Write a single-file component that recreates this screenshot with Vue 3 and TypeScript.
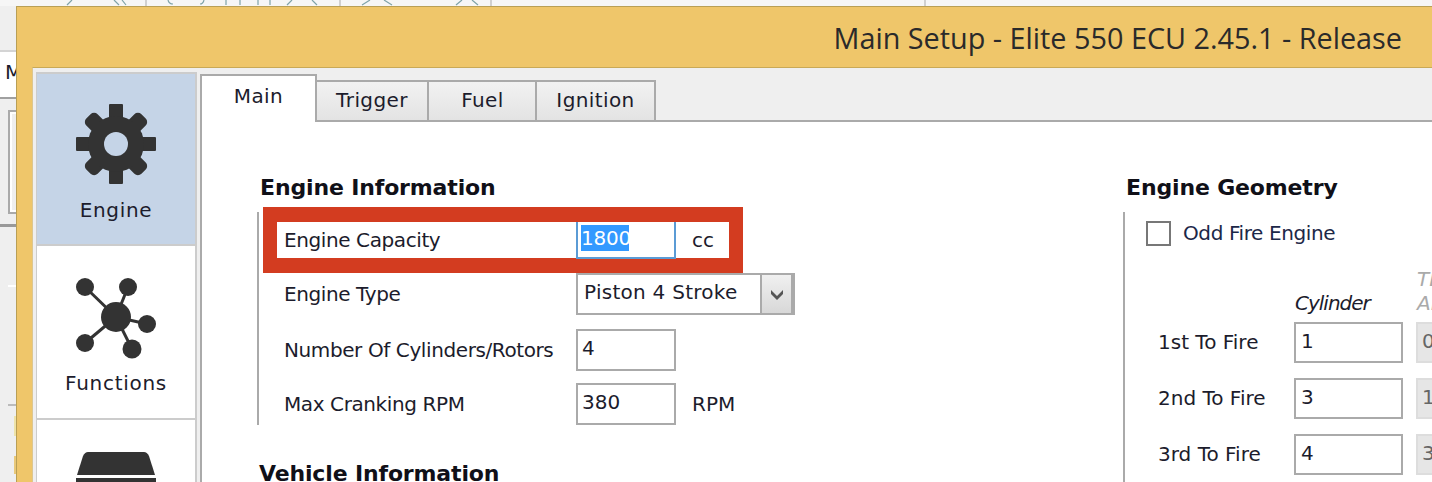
<script setup lang="ts">
const tabs = ['Main', 'Trigger', 'Fuel', 'Ignition']
const cardinalTeeth = [0, 90, 180, 270]
const diagonalTeeth = [45, 135, 225, 315]
const satellites = [
  { x: 9, y: 10, r: 9 },
  { x: 52, y: 10, r: 9 },
  { x: 71, y: 47, r: 9 },
  { x: 56, y: 72, r: 9.5 },
  { x: 9, y: 66, r: 9 },
]
const engineRows = [
  { label: 'Engine Type', value: 'Piston 4 Stroke', kind: 'select', unit: '' },
  { label: 'Number Of Cylinders/Rotors', value: '4', kind: 'input', unit: '' },
  { label: 'Max Cranking RPM', value: '380', kind: 'input', unit: 'RPM' },
]
const firing = [
  { label: '1st To Fire', cyl: '1', angle: '0' },
  { label: '2nd To Fire', cyl: '3', angle: '1' },
  { label: '3rd To Fire', cyl: '4', angle: '3' },
]
</script>

<template>
  <div class="scene">
    <div class="backdrop">
      <svg class="toolbar-strip" viewBox="0 0 1432 6" width="1432" height="6">
        <g fill="none" stroke="#7fa3a8" stroke-width="1.2">
          <path d="M72 0L67 5M114 0L119 5M122 0L126 5" />
          <path d="M168 0Q169 4 173 4M200 4Q203 4 204 0" />
          <path d="M226 0V5M240 0V5M258 0V5M270 0V5M292 0L287 5M312 0L317 5" />
          <path d="M370 0L362 5M384 0L392 5M462 0L456 5M472 0L478 5" />
        </g>
        <path d="M146 0V6M340 0V6M491 0V6M925 0V6" stroke="#c4c4c4" stroke-width="1.5" />
      </svg>
      <div class="menu-band"><span class="menu-letter">M</span></div>
      <div class="side-box"></div>
      <div class="back-rule rule-a"></div>
      <div class="back-rule rule-b"></div>
      <div class="back-rule rule-c"></div>
      <div class="back-mark mark-a"></div>
      <div class="back-mark mark-b"></div>
    </div>

    <section class="window">
      <header class="titlebar">Main Setup - Elite 550 ECU 2.45.1 - Release</header>
      <div class="client">
        <nav class="sidebar">
          <div class="nav-item active">
            <svg class="nav-icon" viewBox="0 0 80 80" width="80" height="80">
              <rect v-for="a in cardinalTeeth" :key="a" x="33" y="0" width="14" height="40" rx="1" fill="#333" :transform="`rotate(${a} 40 40)`" />
              <rect v-for="a in diagonalTeeth" :key="a" x="32" y="1" width="16" height="39" rx="5" fill="#333" :transform="`rotate(${a} 40 40)`" />
              <circle cx="40" cy="40" r="28" fill="#333" />
              <circle cx="40" cy="40" r="12" fill="#c5d4e7" />
            </svg>
            <span>Engine</span>
          </div>
          <div class="nav-item second-item">
            <svg class="nav-icon" viewBox="0 0 80 80" width="80" height="80">
              <line v-for="(s, i) in satellites" :key="'l' + i" x1="40" y1="40" :x2="s.x" :y2="s.y" stroke="#333" stroke-width="3" />
              <circle cx="40" cy="40" r="15" fill="#333" />
              <circle v-for="(s, i) in satellites" :key="'c' + i" :cx="s.x" :cy="s.y" :r="s.r" fill="#333" />
            </svg>
            <span>Functions</span>
          </div>
          <div class="nav-item last">
            <svg class="nav-icon" viewBox="0 0 80 32" width="80" height="32">
              <path d="M12 0H68Q71 0 73 4L79 23H1L7 4Q9 0 12 0Z" fill="#333" />
              <rect x="0" y="26" width="80" height="6" fill="#333" />
            </svg>
          </div>
        </nav>

        <main class="panel">
          <div class="tabstrip">
            <div v-for="(t, i) in tabs" :key="t" class="tab" :class="[i === 0 ? 'tab-on' : '', 'tab-' + t.toLowerCase()]">{{ t }}</div>
          </div>
          <div class="page">
            <div class="col-left">
              <h3 class="group-title">Engine Information</h3>
              <div class="group">
                <div class="row row-first">
                  <label class="row-label">Engine Capacity</label>
                  <div class="field focus"><span class="selected">1800</span></div>
                  <span class="unit">cc</span>
                  <div class="callout"></div>
                </div>
                <div v-for="r in engineRows" :key="r.label" class="row">
                  <label class="row-label">{{ r.label }}</label>
                  <div v-if="r.kind === 'select'" class="select">
                    <span class="select-value">{{ r.value }}</span>
                    <span class="select-btn">
                      <svg viewBox="0 0 14 12" width="14" height="12"><path d="M1 2L7 8L13 2V6L7 12L1 6Z" fill="#555" /></svg>
                    </span>
                  </div>
                  <div v-else class="field">{{ r.value }}</div>
                  <span v-if="r.unit" class="unit">{{ r.unit }}</span>
                </div>
              </div>
              <h3 class="group-title second">Vehicle Information</h3>
            </div>

            <div class="col-right">
              <h3 class="group-title">Engine Geometry</h3>
              <div class="group group-right">
                <div class="check-row"><span class="checkbox"></span><span>Odd Fire Engine</span></div>
                <div class="fire-head">
                  <span class="head-cyl">Cylinder</span>
                  <span class="head-angle">TDC<br />Angle</span>
                </div>
                <div v-for="f in firing" :key="f.label" class="fire-row">
                  <label class="fire-label">{{ f.label }}</label>
                  <div class="field fire-field">{{ f.cyl }}</div>
                  <div class="field field-off">{{ f.angle }}</div>
                </div>
              </div>
            </div>
          </div>
        </main>
      </div>
    </section>
  </div>
</template>

<style>
html, body { margin: 0; background: #efefef; }
</style>

<style scoped>
.scene {
  position: relative;
  width: 1432px;
  height: 482px;
  overflow: hidden;
  background: #efefef;
  font-family: "DejaVu Sans", sans-serif;
  font-size: 20px;
  color: #1c1c2c;
}
.backdrop { position: absolute; inset: 0; }
.toolbar-strip { display: block; background: #f6f6f6; }
.menu-band {
  position: absolute; left: 0; top: 50px; width: 16px; height: 49px;
  background: #fff; border-top: 2px solid #d4d4d4; border-bottom: 2px solid #a0a0a0; box-sizing: border-box;
}
.menu-letter { position: absolute; left: 5px; top: 8px; }
.side-box { position: absolute; left: 8px; top: 110px; width: 12px; height: 104px; border: 2px solid #aaa; box-sizing: border-box; outline: 2px solid #fff; outline-offset: -4px; }
.back-rule { position: absolute; left: 0; width: 16px; background: #999; }
.rule-a { top: 224px; height: 3px; }
.rule-b { top: 404px; left: 8px; width: 8px; height: 2px; background: #bbb; }
.rule-c { top: 285px; left: 8px; width: 8px; height: 2px; background: #fff; }
.back-mark { position: absolute; left: 14px; width: 2px; background: #efe3a8; }
.mark-a { top: 416px; height: 20px; }
.mark-b { top: 456px; height: 18px; background: #e9c97a; }

.window {
  position: absolute; left: 16px; top: 6px; width: 1500px; height: 520px;
  box-sizing: border-box;
  background: #efc66a;
  border: 1px solid #b99f55;
  padding: 0 0 0 15px;
  display: flex; flex-direction: column;
}
.titlebar {
  height: 60px; flex: none; box-sizing: border-box; width: 1370px;
  text-align: right; white-space: nowrap;
  font-family: "Open Sans", sans-serif; font-size: 28.8px; line-height: 62px; color: #2a2a2a;
}
.client {
  flex: 1; display: flex; background: #efefef; border-top: 1px solid #c9a956; border-left: 1px solid #dcc690;
  padding: 4px 0 0 3px; gap: 3px; min-height: 0;
}
.sidebar {
  width: 161px; flex: none; box-sizing: border-box; background: #fff;
  border: 2px solid #ccc; border-width: 2px 2px 0 1px;
  text-align: center;
}
.nav-item { height: 172px; box-sizing: border-box; padding-top: 30px; border-bottom: 2px solid #ccc; display: flex; flex-direction: column; align-items: center; }
.nav-item.active { background: #c5d4e7; }
.nav-item span { line-height: 24px; margin-top: 14px; letter-spacing: .7px; }
.second-item { height: 174px; padding-top: 31px; }
.nav-item.last { border-bottom: 0; padding-top: 32px; }
.nav-icon { flex: none; overflow: visible; }

.panel { flex: 1; min-width: 0; padding-top: 4px; }
.tabstrip { display: flex; align-items: flex-end; height: 46px; box-sizing: border-box; border-bottom: 2px solid #aaa; position: relative; }
.tab {
  box-sizing: border-box; height: 40px; border: 2px solid #aaa; border-left-width: 0; border-bottom: 0;
  background: linear-gradient(#f2f2f2, #e3e3e3); text-align: center; line-height: 36px; letter-spacing: .4px;
}
.tab-on { background: #fff; width: 117px; border-left-width: 2px; line-height: 40px; margin-bottom: -2px; position: relative; z-index: 1; height: 48px; }
.tab-trigger { width: 112px; }
.tab-fuel { width: 108px; padding-left: 1px; }
.tab-ignition { width: 119px; }

.page {
  background: #fff; border-left: 2px solid #aaa; height: 400px;
  display: flex; padding: 53px 0 0 58px; box-sizing: border-box;
}
.col-left { width: 866px; flex: none; }
.group-title { margin: 0; font-size: 22px; font-weight: 700; line-height: 26px; color: #101018; font-family: "DejaVu Sans", sans-serif; letter-spacing: -.15px; }
.group-title.second { margin-top: 36px; margin-left: -1px; }
.group { border-left: 2px solid #aaa; margin: 11px 0 0 -3px; padding-left: 25px; display: flow-root; }
.row { display: flex; align-items: center; height: 42px; margin-top: 14px; position: relative; }
.row:last-child { margin-top: 12px; }
.row-first { height: 37px; margin-top: 10px; align-items: flex-start; }
.row-label { width: 292px; flex: none; letter-spacing: -.4px; }
.row-first .row-label { line-height: 37px; }
.field {
  box-sizing: border-box; width: 100px; height: 42px; border: 2px solid #aaa; padding-left: 4px; line-height: 34px; flex: none; background: #fff;
}
.field.focus { border-color: #5b9bd5; border-top-width: 0; height: 37px; line-height: 26px; padding: 3px 0 0 3px; position: relative; z-index: 1; }
.selected { background: #3399ff; color: #fff; display: inline-block; width: 48px; height: 26px; letter-spacing: -.2px; }
.unit { margin-left: 16px; }
.row-first .unit { line-height: 37px; }
.callout {
  position: absolute; left: -21px; top: -15px; width: 480px; height: 66px; box-sizing: border-box;
  border: 15px solid #d33c20; border-width: 15px 14px; pointer-events: none;
}
.select { box-sizing: border-box; width: 219px; height: 42px; border: 2px solid #aaa; padding-left: 6px; display: flex; align-items: center; justify-content: space-between; }
.select-value { letter-spacing: .27px; line-height: 34px; align-self: flex-start; }
.select-btn { width: 33px; height: 38px; box-sizing: border-box; border: 2px solid #aaa; border-width: 0 2px 0 2px; background: linear-gradient(#f0f0f0, #d8d8d8); display: flex; align-items: center; justify-content: center; }

.col-right { flex: none; width: 320px; }
.group-right { padding-left: 21px; }
.check-row { display: flex; align-items: center; gap: 12px; height: 36px; margin-top: 3px; color: #1c2848; letter-spacing: -.4px; }
.checkbox { width: 25px; height: 25px; box-sizing: border-box; border: 2px solid #777; background: #fff; }
.fire-head { height: 63px; position: relative; font-style: italic; }
.head-cyl { position: absolute; left: 149px; bottom: -1px; letter-spacing: -1px; }
.head-angle { position: absolute; left: 271px; bottom: -1px; color: #aaa; line-height: 24px; }
.fire-row { display: flex; align-items: center; height: 56px; }
.fire-label { width: 136px; flex: none; margin-left: 12px; }
.fire-field { width: 109px; height: 41px; padding-left: 5px; }
.field-off { margin-left: 13px; width: 60px; height: 41px; background: #e6e6e6; border-color: #ddd; color: #666; }
</style>
